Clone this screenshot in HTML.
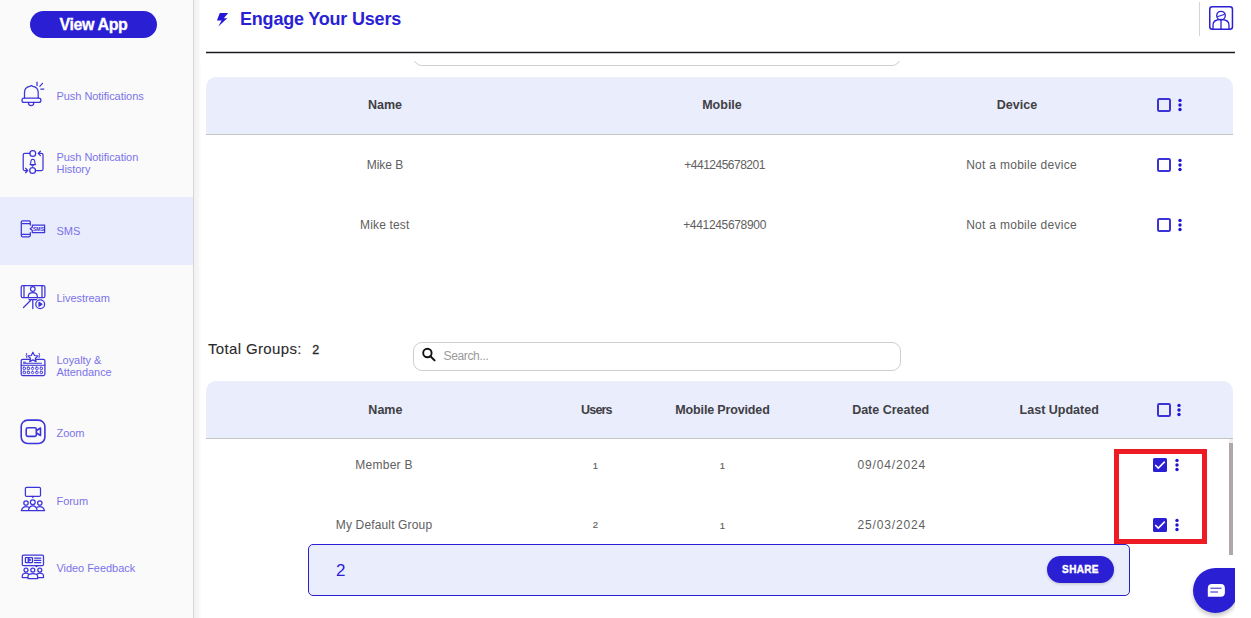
<!DOCTYPE html>
<html><head><meta charset="utf-8">
<style>
*{box-sizing:border-box;margin:0;padding:0}
html,body{width:1251px;height:618px;overflow:hidden;background:#fff;font-family:"Liberation Sans",sans-serif}
.abs{position:absolute}
#side{position:absolute;left:0;top:0;width:194px;height:618px;background:#fafafa;border-right:1px solid #d6d6d6}
#shadow{position:absolute;left:194px;top:0;width:7px;height:618px;background:linear-gradient(to right,#f2f2f2 0,#f6f6f6 5px,#fbfbfb 5px,#fcfcfc 7px)}
.btn{position:absolute;left:30px;top:11px;width:127px;height:27px;border-radius:14px;background:#2b1fd4;color:#fff;font-weight:bold;font-size:16px;text-align:center;line-height:27px;letter-spacing:-0.4px;-webkit-text-stroke:0.3px #fff}
.item{position:absolute;left:0;width:193px;height:68px}
.item.active{background:#e9ecfd}
.item .lbl{position:absolute;left:56.5px;font-size:11px;color:#7a73ea;line-height:12px;letter-spacing:-0.05px}
.item svg{position:absolute;left:21px}
.title{position:absolute;left:240px;top:8.5px;font-size:18px;font-weight:bold;color:#2b1fd4;letter-spacing:-0.2px}
.hline{position:absolute;left:206px;top:52px;width:1029px;height:1px;background:#1a1a1e;box-shadow:0 -0.5px 0 rgba(30,30,36,0.5),0 0.5px 0 rgba(30,30,36,0.5)}
.card{position:absolute;left:206px;width:1027px;height:58px;background:#eaedfc;border-radius:10px 10px 0 0;border-bottom:1px solid #c4c4c4}
.th{position:absolute;font-size:12.5px;font-weight:bold;color:#404044;transform:translateX(-50%);white-space:nowrap}
.td{position:absolute;font-size:12px;color:#606060;transform:translateX(-50%);white-space:nowrap}
.cb{position:absolute;width:14px;height:14px;border:2px solid #3a30d6;border-radius:2px}
.cbk{position:absolute;width:14px;height:14px;background:#2b1fd4;border-radius:2px}
.cbk:after{content:"";position:absolute;left:2.5px;top:2px;width:7px;height:4px;border-left:2px solid #fff;border-bottom:2px solid #fff;transform:rotate(-45deg);transform-origin:center;left:3px;top:3.5px}
.dots{position:absolute;width:3px}
.dots i{display:block;width:3px;height:3px;border-radius:50%;background:#2b1fd4;margin-bottom:1.5px}
</style></head><body>
<div id="side">
  <div class="btn">View App</div>
  <div class="item" style="top:62px"><div class="lbl" style="top:28px">Push Notifications</div></div>
  <div class="item" style="top:129.5px"><div class="lbl" style="top:21.2px">Push Notification<br>History</div></div>
  <div class="item active" style="top:197px;height:67.5px"><div class="lbl" style="top:28px">SMS</div></div>
  <div class="item" style="top:264.5px"><div class="lbl" style="top:27px">Livestream</div></div>
  <div class="item" style="top:332px"><div class="lbl" style="top:22px">Loyalty &amp;<br>Attendance</div></div>
  <div class="item" style="top:399.5px"><div class="lbl" style="top:27px">Zoom</div></div>
  <div class="item" style="top:467px"><div class="lbl" style="top:28px">Forum</div></div>
  <div class="item" style="top:534.5px"><div class="lbl" style="top:27px">Video Feedback</div></div>
  <svg class="abs" style="left:0;top:0" width="193" height="618" viewBox="0 0 193 618" fill="none" stroke="#3d34da" stroke-width="1.25" stroke-linecap="round" stroke-linejoin="round">
    <!-- bell -->
    <path d="M24.5 98.2 L24.5 92.5 Q24.5 87.4 29.6 86.4 L31.3 85.6 L33 86.4 Q38.2 87.4 38.2 92.5 L38.2 98.2"/>
    <rect x="22" y="98.2" width="18.9" height="4.2" rx="2"/>
    <path d="M28.4 102.4 Q28.4 105.6 31.1 105.6 Q33.8 105.6 33.8 102.4"/>
    <path d="M37 82 L37 85.5 M42.5 83.3 L39.8 86.3 M40.8 89.1 L43.8 89.1"/>
    <!-- history -->
    <circle cx="32.8" cy="153.4" r="2.9"/>
    <circle cx="32.6" cy="170.5" r="2.9"/>
    <path d="M29.9 153.4 L24.7 153.4 Q23.2 153.4 23.2 154.9 L23.2 169 Q23.2 170.5 24.7 170.5 L27.5 170.5 M25.6 168.3 L27.7 170.5 L25.6 172.7"/>
    <path d="M35.5 170.5 L41.5 170.5 Q43 170.5 43 169 L43 154.9 Q43 153.4 41.5 153.4 L38.3 153.4 M40.4 151.2 L38.2 153.4 L40.4 155.6"/>
    <path d="M30 164.6 Q30.9 163.6 30.9 161.6 Q30.9 159.4 32.8 159.3 Q34.7 159.4 34.7 161.6 Q34.7 163.6 35.6 164.6 Z" stroke-width="1.1"/>
    <path d="M32 165.2 L33.6 165.2 L32.8 166.2 Z" stroke-width="1"/>
    <!-- sms -->
    <path d="M30.3 225 L30.3 222 Q30.3 220.8 29 220.8 L22.5 220.8 Q21.3 220.8 21.3 222 L21.3 235.6 Q21.3 236.8 22.5 236.8 L29 236.8 Q30.3 236.8 30.3 235.6 L30.3 232.5"/>
    <path d="M22 223.5 L30 223.5 M21.5 234.4 L29.5 234.4"/>
    <path d="M32.3 225.2 L44.6 225.2 L44.6 232.5 L32.3 232.5 L32.3 230.5 L30.2 228.8 L32.3 227.2 Z"/>
    <text x="38.5" y="231" font-size="5.2" font-family="Liberation Sans" fill="#3a30d8" stroke="none" text-anchor="middle" font-weight="bold">SMS</text>
    <!-- livestream -->
    <rect x="21.2" y="285.6" width="23.7" height="12.1" rx="1.5"/>
    <path d="M24 286 L24 297.3 M42 286 L42 297.3"/>
    <circle cx="32.8" cy="289" r="2.3"/>
    <path d="M28.3 296 Q28.5 292.5 32.8 292.5 Q37.1 292.5 37.3 296 L37.3 297.7 M28.3 296 L28.3 297.7"/>
    <path d="M29 299.6 L36.6 299.6 M32.8 299.6 L32.8 308.5 M30.5 300.5 L23.5 307.5"/>
    <circle cx="40.2" cy="304.3" r="4.4"/>
    <path d="M39 302.4 L42 304.3 L39 306.2 Z" fill="#3a30d8"/>
    <!-- loyalty -->
    <path d="M30.3 359.3 L22.7 359.3 Q21.2 359.3 21.2 360.8 L21.2 374 Q21.2 375.5 22.7 375.5 L43.4 375.5 Q44.9 375.5 44.9 374 L44.9 360.8 Q44.9 359.3 43.4 359.3 L35.3 359.3"/>
    <path d="M21.2 365.3 L44.9 365.3 M23.5 362.2 L25.5 362.2 M23.5 363.3 L41.5 363.3" stroke-width="1"/>
    <g stroke-width="0.9"><rect x="23.1" y="367.2" width="2.4" height="2.4" rx="0.6"/><rect x="27.2" y="367.2" width="2.4" height="2.4" rx="0.6"/><rect x="31.3" y="367.2" width="2.4" height="2.4" rx="1.2"/><rect x="35.7" y="367.2" width="2.4" height="2.4" rx="0.6"/><rect x="40.1" y="367.2" width="2.4" height="2.4" rx="0.6"/>
    <rect x="23.1" y="371.3" width="2.4" height="2.4" rx="0.6"/><rect x="27.2" y="371.3" width="2.4" height="2.4" rx="0.6"/><rect x="31.3" y="371.3" width="2.4" height="2.4" rx="1.2"/><rect x="35.7" y="371.3" width="2.4" height="2.4" rx="0.6"/><rect x="40.1" y="371.3" width="2.4" height="2.4" rx="0.6"/></g>
    <path d="M32.9 352.2 L34.5 355.5 L38 355.9 L35.4 358.3 L36.1 361.6 L32.9 359.9 L29.7 361.6 L30.4 358.3 L27.8 355.9 L31.3 355.5 Z" stroke-width="1.2"/>
    <path d="M26.6 353.3 Q25.4 355.6 26.8 357.9 M39.2 353.3 Q40.4 355.6 39 357.9" stroke-width="0.9"/>
    <!-- zoom -->
    <rect x="21.2" y="420.1" width="23.7" height="23.4" rx="6.5" stroke-width="1.6"/>
    <rect x="26.2" y="427.8" width="10.2" height="8.6" rx="1.6" stroke-width="1.6"/>
    <path d="M36.4 430.5 L40.5 428 L40.5 435.5 L36.4 433" stroke-width="1.6"/>
    <!-- forum -->
    <rect x="25.4" y="487.3" width="15.1" height="9.1" rx="1.2"/>
    <path d="M32 496.4 L32.8 497.5 L33.6 496.4"/>
    <circle cx="32.8" cy="502.3" r="2.4"/>
    <circle cx="26" cy="503" r="2.2"/>
    <circle cx="39.8" cy="503" r="2.2"/>
    <path d="M21.3 510.6 L44.6 510.6 M21.5 510.5 Q22.5 506.5 26 506.5 Q28.5 506.5 29.5 508 M44.4 510.5 Q43.4 506.5 39.8 506.5 Q37.2 506.5 36.2 508 M28.5 510.5 Q29 505.8 32.8 505.8 Q36.6 505.8 37.1 510.5"/>
    <!-- video feedback -->
    <rect x="22.3" y="555.1" width="21.2" height="10.5" rx="1.2"/>
    <rect x="25.4" y="557.5" width="7.1" height="5" rx="0.6"/>
    <path d="M28.2 558.6 L30.6 560 L28.2 561.4 Z M34.5 558 L40.8 558 M34.5 560.4 L40.8 560.4 M34.5 562.5 L40.8 562.5 M35.5 565.6 L36.5 566.6 L37.5 565.6"/>
    <circle cx="26" cy="570" r="2"/>
    <circle cx="32.8" cy="570" r="2"/>
    <circle cx="39.8" cy="570" r="2"/>
    <path d="M22.3 576 Q22.3 573 26 573 Q27.5 573 28.5 574 M43.5 576 Q43.5 573 39.8 573 Q38.3 573 37.3 574 M22.3 576 L22.3 577.5 L27.8 577.5 M43.5 576 L43.5 577.5 L38 577.5 M28 578.5 L28 576 Q28.5 573.5 32.8 573.5 Q37.1 573.5 37.6 576 L37.6 578.5 Z"/>
  </svg>
</div>
<div id="shadow"></div>

<!-- top search box partially visible -->
<div class="abs" style="left:413px;top:37px;width:488px;height:29px;border:1px solid #d0d0d0;border-radius:9px"></div>
<div class="abs" style="left:200px;top:0;width:1051px;height:61px;background:#fff"></div>
<!-- header -->
<svg class="abs" style="left:210px;top:5px" width="25" height="25" viewBox="210 5 25 25"><path d="M219.8 13 L228.2 13 L223.8 18.2 L227.3 18.2 L218.3 26.6 L221.6 20.6 L216.9 20.6 Z" fill="#2516d6"/></svg>
<div class="title">Engage Your Users</div>
<div class="abs" style="left:1199px;top:2px;width:1px;height:34px;background:#d4d4d4"></div>
<svg class="abs" style="left:1209px;top:6px" width="25" height="24" viewBox="0 0 25 24">
  <rect x="0.75" y="0.75" width="22.7" height="22.5" rx="2.5" fill="none" stroke="#2b1fd4" stroke-width="1.5"/>
  <circle cx="12" cy="9.6" r="4.3" fill="none" stroke="#2b1fd4" stroke-width="1.3"/>
  <path d="M8.3 10.8 L15.7 8.3" stroke="#2b1fd4" stroke-width="1.2"/>
  <path d="M4 23 L4 19 Q4 13.5 12 13.5 Q20 13.5 20 19 L20 23" fill="none" stroke="#2b1fd4" stroke-width="1.3"/>
  <path d="M12 13.5 L12 23" stroke="#2b1fd4" stroke-width="1.3"/>
</svg>
<div class="hline"></div>


<!-- table 1 -->
<div class="card" style="top:77px">
</div>
<div class="th" style="left:385px;top:98px">Name</div>
<div class="th" style="left:722px;top:98px">Mobile</div>
<div class="th" style="left:1017px;top:98px">Device</div>
<svg class="abs" style="left:1157px;top:98px" width="14" height="14" viewBox="0 0 14 14"><rect x="1" y="1" width="12" height="12" rx="1.2" fill="none" stroke="#3c33d6" stroke-width="2"/></svg>
<svg class="abs" style="left:1178px;top:98px" width="4" height="14" viewBox="0 0 4 14"><circle cx="2" cy="2.4" r="1.7" fill="#2115cc"/><circle cx="2" cy="7" r="1.7" fill="#2115cc"/><circle cx="2" cy="11.5" r="1.7" fill="#2115cc"/></svg>

<div class="td" style="left:385px;top:158px">Mike B</div>
<div class="td" style="left:724.6px;top:158px;letter-spacing:-0.5px">+441245678201</div>
<div class="td" style="left:1021.6px;top:158px;letter-spacing:0.29px">Not a mobile device</div>
<svg class="abs" style="left:1157px;top:158px" width="14" height="14" viewBox="0 0 14 14"><rect x="1" y="1" width="12" height="12" rx="1.2" fill="none" stroke="#3c33d6" stroke-width="2"/></svg>
<svg class="abs" style="left:1178px;top:158px" width="4" height="14" viewBox="0 0 4 14"><circle cx="2" cy="2.4" r="1.7" fill="#2115cc"/><circle cx="2" cy="7" r="1.7" fill="#2115cc"/><circle cx="2" cy="11.5" r="1.7" fill="#2115cc"/></svg>

<div class="td" style="left:384.8px;top:218px;letter-spacing:0.16px">Mike test</div>
<div class="td" style="left:724.6px;top:218px;letter-spacing:-0.33px">+441245678900</div>
<div class="td" style="left:1021.6px;top:218px;letter-spacing:0.29px">Not a mobile device</div>
<svg class="abs" style="left:1157px;top:218px" width="14" height="14" viewBox="0 0 14 14"><rect x="1" y="1" width="12" height="12" rx="1.2" fill="none" stroke="#3c33d6" stroke-width="2"/></svg>
<svg class="abs" style="left:1178px;top:218px" width="4" height="14" viewBox="0 0 4 14"><circle cx="2" cy="2.4" r="1.7" fill="#2115cc"/><circle cx="2" cy="7" r="1.7" fill="#2115cc"/><circle cx="2" cy="11.5" r="1.7" fill="#2115cc"/></svg>

<!-- groups -->
<div class="abs" style="left:208px;top:340px;font-size:15px;color:#2a2a2a;letter-spacing:0.35px;-webkit-text-stroke:0.1px #2a2a2a">Total Groups:</div>
<div class="abs" style="left:312.3px;top:342.5px;font-size:12.5px;color:#2a2a2a;-webkit-text-stroke:0.35px #2a2a2a">2</div>
<div class="abs" style="left:413px;top:342px;width:488px;height:29px;border:1px solid #cfcfcf;border-radius:9px"></div>
<div class="abs" style="left:443.5px;top:348.6px;font-size:12px;color:#9a9a9a;letter-spacing:-0.35px">Search...</div>
<svg class="abs" style="left:420px;top:346px" width="18" height="18" viewBox="0 0 18 18"><circle cx="7.4" cy="7" r="4.2" fill="none" stroke="#111" stroke-width="1.9"/><path d="M10.4 10.2 L14.6 14.4" stroke="#111" stroke-width="2" stroke-linecap="round"/></svg>

<div class="card" style="top:381px"></div>
<div class="th" style="left:385.4px;top:403px">Name</div>
<div class="th" style="left:596.4px;top:403px;letter-spacing:-0.8px">Users</div>
<div class="th" style="left:722.5px;top:403px;letter-spacing:-0.15px">Mobile Provided</div>
<div class="th" style="left:890.7px;top:403px">Date Created</div>
<div class="th" style="left:1059.2px;top:403px">Last Updated</div>
<svg class="abs" style="left:1157px;top:403px" width="14" height="14" viewBox="0 0 14 14"><rect x="1" y="1" width="12" height="12" rx="1.2" fill="none" stroke="#3c33d6" stroke-width="2"/></svg>
<svg class="abs" style="left:1177px;top:403px" width="4" height="14" viewBox="0 0 4 14"><circle cx="2" cy="2.4" r="1.7" fill="#2115cc"/><circle cx="2" cy="7" r="1.7" fill="#2115cc"/><circle cx="2" cy="11.5" r="1.7" fill="#2115cc"/></svg>

<div class="td" style="left:384px;top:458px;letter-spacing:0.27px">Member B</div>
<div class="td" style="left:595.5px;top:459.6px;font-size:9.5px;-webkit-text-stroke:0.15px #606060">1</div>
<div class="td" style="left:722.4px;top:459.6px;font-size:9.5px;-webkit-text-stroke:0.15px #606060">1</div>
<div class="td" style="left:891.8px;top:458px;letter-spacing:0.84px">09/04/2024</div>
<svg class="abs" style="left:1153px;top:458px" width="14" height="14" viewBox="0 0 14 14"><rect x="0" y="0" width="14" height="14" rx="1.5" fill="#2b1fd4"/><path d="M2.2 6.9 L5.3 10.1 L11.8 3.6" fill="none" stroke="#fff" stroke-width="1.5"/></svg>
<svg class="abs" style="left:1175px;top:458px" width="4" height="14" viewBox="0 0 4 14"><circle cx="2" cy="2.4" r="1.7" fill="#2115cc"/><circle cx="2" cy="7" r="1.7" fill="#2115cc"/><circle cx="2" cy="11.5" r="1.7" fill="#2115cc"/></svg>

<div class="td" style="left:384px;top:518px;letter-spacing:0.15px">My Default Group</div>
<div class="td" style="left:595.5px;top:519.4px;font-size:9.5px;-webkit-text-stroke:0.15px #606060">2</div>
<div class="td" style="left:722.4px;top:519.6px;font-size:9.5px;-webkit-text-stroke:0.15px #606060">1</div>
<div class="td" style="left:891.8px;top:518px;letter-spacing:0.84px">25/03/2024</div>
<svg class="abs" style="left:1153px;top:518px" width="14" height="14" viewBox="0 0 14 14"><rect x="0" y="0" width="14" height="14" rx="1.5" fill="#2b1fd4"/><path d="M2.2 6.9 L5.3 10.1 L11.8 3.6" fill="none" stroke="#fff" stroke-width="1.5"/></svg>
<svg class="abs" style="left:1175px;top:518px" width="4" height="14" viewBox="0 0 4 14"><circle cx="2" cy="2.4" r="1.7" fill="#2115cc"/><circle cx="2" cy="7" r="1.7" fill="#2115cc"/><circle cx="2" cy="11.5" r="1.7" fill="#2115cc"/></svg>

<div class="abs" style="left:1114px;top:449px;width:93px;height:95px;border:5px solid #ec1b24"></div>
<div class="abs" style="left:1229px;top:439px;width:4px;height:4px;background:#efefef"></div>
<div class="abs" style="left:1229px;top:443px;width:4px;height:112px;background:#b0a8a8"></div>

<!-- share bar -->
<div class="abs" style="left:308px;top:544px;width:822px;height:52px;background:#eaedfc;border:1px solid #2b1fd4;border-radius:5px"></div>
<div class="abs" style="left:336px;top:560.7px;font-size:17px;color:#2b1fd4">2</div>
<div class="abs" style="left:1047px;top:556px;width:67px;height:27px;border-radius:14px;background:#2b1fd4;color:#fff;font-weight:bold;font-size:10px;letter-spacing:0.35px;-webkit-text-stroke:0.4px #fff;text-align:center;line-height:27px;box-shadow:0 1px 3px rgba(0,0,0,0.2)">SHARE</div>

<!-- chat -->
<div class="abs" style="left:1180px;top:555px;width:55px;height:63px;overflow:hidden">
<div class="abs" style="left:13px;top:13px;width:45px;height:45px;background:#2b1fd4;border-radius:50% 0 50% 50%;box-shadow:0 3px 4px rgba(0,0,0,0.22)"></div>
<svg class="abs" style="left:27px;top:29px" width="18" height="13" viewBox="0 0 18 13"><path d="M0.8 12.8 L0.8 4.4 Q0.8 0 5 0 L13.9 0 Q17.9 0 17.9 4.4 L17.9 8.6 Q17.9 12.8 13.7 12.8 Z" fill="#fff"/><path d="M3.8 4.2 L14.2 4.2 M3.8 8 L10.6 8" stroke="#2b1fd4" stroke-width="1" stroke-linecap="round"/></svg>
</div>
</body></html>
